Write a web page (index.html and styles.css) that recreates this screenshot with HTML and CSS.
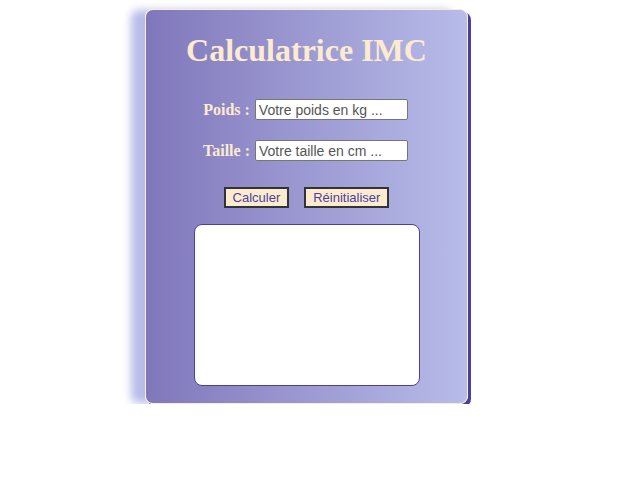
FILE: index.html
```html
<!DOCTYPE html>
<html lang="fr">
<head>
<meta charset="utf-8">
<title>Calculatrice IMC</title>
<link rel="stylesheet" href="styles.css">
</head>
<body>
<div class="card">
  <h1 class="title">Calculatrice IMC</h1>
  <div class="row">
    <label class="label" for="poids">Poids :</label>
    <input class="field" id="poids" type="text" placeholder="Votre poids en kg ...">
  </div>
  <div class="row">
    <label class="label" for="taille">Taille :</label>
    <input class="field" id="taille" type="text" placeholder="Votre taille en cm ...">
  </div>
  <div class="buttons">
    <button class="btn" type="button">Calculer</button>
    <button class="btn" type="button">Réinitialiser</button>
  </div>
  <div class="result"></div>
</div>
</body>
</html>
```
FILE: styles.css
```css
html, body {
  margin: 0;
  padding: 0;
  background: #ffffff;
}
body {
  padding: 9px 0 0 145px;
}
.card {
  box-sizing: border-box;
  width: 323px;
  height: 395px;
  border: 1px solid #fdebd0;
  border-radius: 8px;
  background: linear-gradient(to right, #8077bb 0%, #b8bce9 100%);
  box-shadow: 3px 3px 0 #4b3f9e, -15px 0 9px -1px #b8bce9;
  display: flex;
  flex-direction: column;
  align-items: center;
  font-family: "Liberation Serif", "Times New Roman", serif;
}
.title {
  margin: 20px 0 0 0;
  font-size: 32px;
  line-height: 40px;
  font-weight: bold;
  color: #fdebd0;
}
.row {
  display: flex;
  align-items: center;
  gap: 5px;
  margin-top: 29px;
  margin-left: -2px;
}
.row + .row {
  margin-top: 20px;
}
.label {
  font-weight: bold;
  font-size: 16px;
  color: #fdebd0;
}
.field {
  box-sizing: border-box;
  width: 153px;
  height: 21px;
  padding: 1px 3px;
  border: 1px solid #767676;
  border-radius: 2px;
  background: #fff;
  font-family: "Liberation Sans", Arial, sans-serif;
  font-size: 14px;
  color: #333;
}
.field::placeholder {
  color: #555;
}
.buttons {
  display: flex;
  gap: 15px;
  margin-top: 26px;
  margin-left: 0;
}
.btn {
  box-sizing: border-box;
  height: 21px;
  padding: 0 7px;
  border: 2px solid #333;
  background: #fdebd0;
  color: #4b3f9e;
  font-family: "Liberation Sans", Arial, sans-serif;
  font-size: 13px;
  line-height: 17px;
}
.result {
  box-sizing: border-box;
  width: 226px;
  height: 162px;
  margin-top: 16px;
  margin-left: 0;
  background: #ffffff;
  border: 1px solid #4b3f9e;
  border-radius: 8px;
}
```
